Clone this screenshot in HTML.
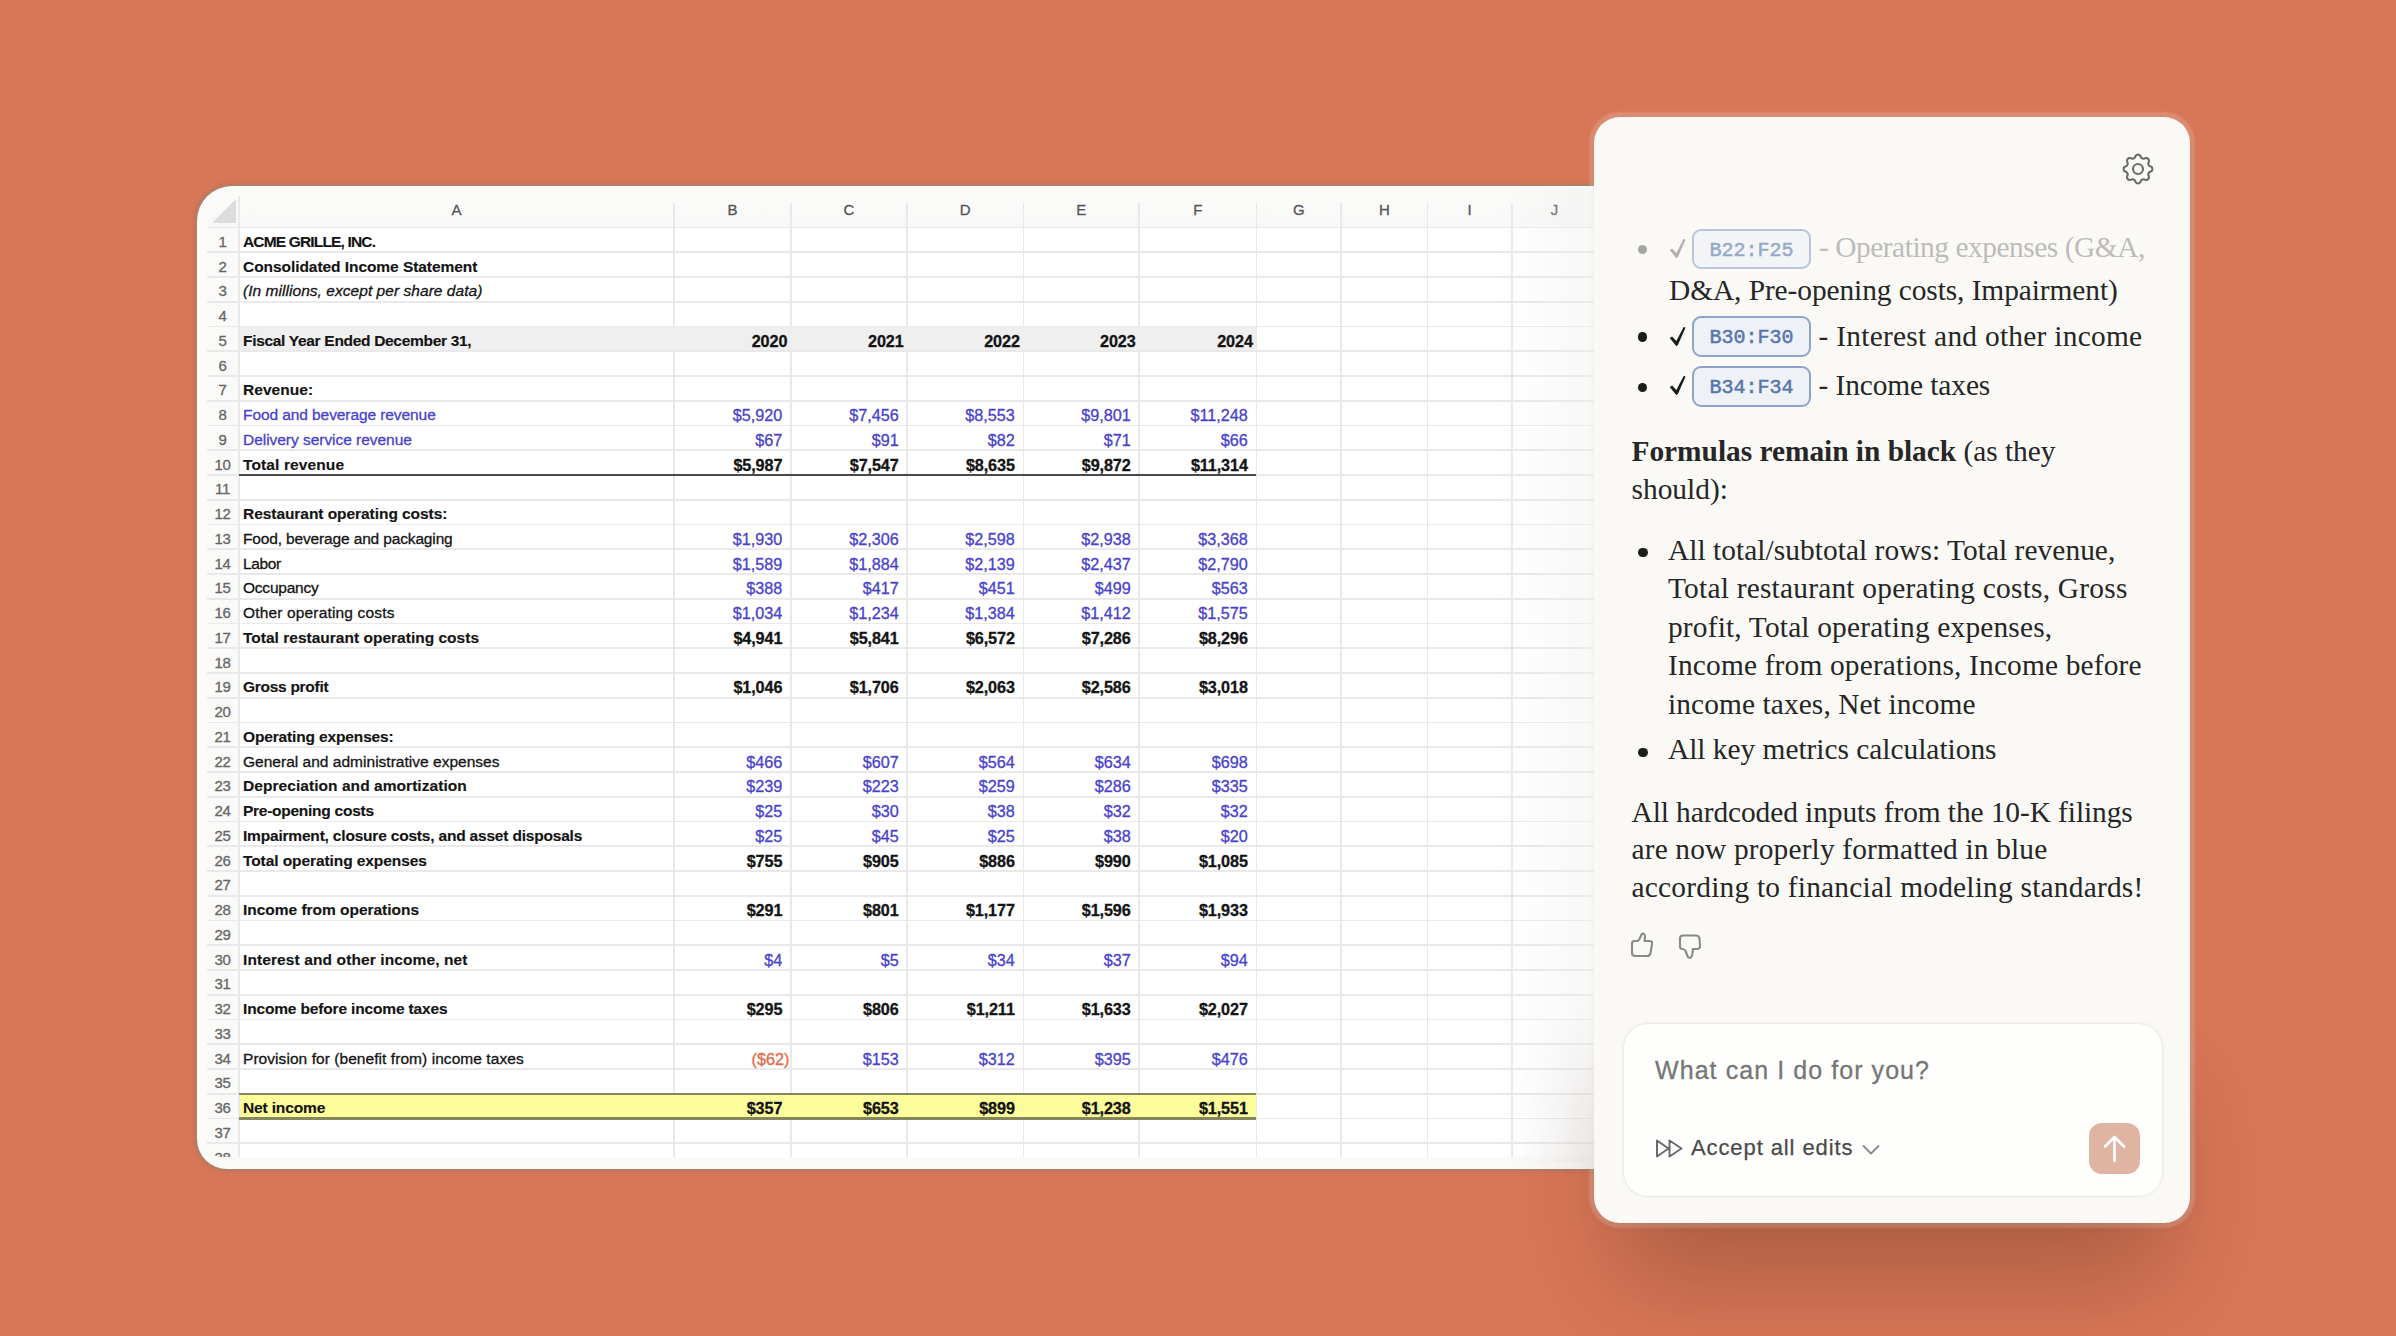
<!DOCTYPE html>
<html><head><meta charset="utf-8">
<style>
html,body{margin:0;padding:0}
body{width:2396px;height:1336px;position:relative;overflow:hidden;background:#d87758;font-family:"Liberation Sans",sans-serif}
.abs{position:absolute}
#sheet{position:absolute;left:197px;top:186px;width:1440px;height:983px;background:#fafaf8;border-radius:35px 0 0 30px;box-shadow:0 0 2px 1.5px rgba(150,140,120,0.55),0 0 5px 2px rgba(120,90,70,0.18)}
#grid{position:absolute;left:0;top:0;width:2396px;height:1336px;clip-path:inset(187px 799px 179px 207px)}
.hl{position:absolute;height:1.6px;background:#e9e9e9}
.vl{position:absolute;width:1.6px;background:#e9e9e9}
.t{position:absolute;white-space:pre;font-size:15.5px;line-height:20px;color:#141414;-webkit-text-stroke:0.3px currentColor}
.b,.b.t{-webkit-text-stroke:0.15px currentColor}
.b{font-weight:bold;letter-spacing:-0.1px}
.i{font-style:italic}
.blue{color:#4842cc}
.rn{position:absolute;width:31px;text-align:center;font-size:15px;line-height:20px;color:#666;letter-spacing:-0.3px;-webkit-text-stroke:0.3px currentColor}
.ch{position:absolute;text-align:center;font-size:15px;line-height:20px;color:#555;-webkit-text-stroke:0.3px currentColor}
.num{position:absolute;text-align:right;white-space:pre;font-size:16.2px;line-height:20px;-webkit-text-stroke:0.3px currentColor}
#chat{position:absolute;left:1594px;top:117px;width:596px;height:1106px;background:#faf9f6;border-radius:26px;box-shadow:0 0 2px 5px rgba(255,255,255,0.17),0 2px 10px rgba(90,50,30,0.12)}
.ct{position:absolute;white-space:pre;font-family:"Liberation Serif",serif;font-size:29.4px;line-height:38px;color:#262626}
</style></head><body>
<div id="sheet"></div>
<div id="grid">

<div class="abs" style="left:239px;top:227px;width:1360px;height:930px;background:#ffffff"></div>
<div class="abs" style="left:207px;top:196px;width:1390px;height:31px;background:linear-gradient(#fbfbf9,#f8f8f8)"></div>
<svg class="abs" style="left:207px;top:192px" width="32" height="35"><polygon points="5,31 29,31 29,7" fill="#dcdcdc"/></svg>
<div class="hl" style="left:207px;top:226.7px;width:1400px"></div>
<div class="hl" style="left:207px;top:251.45px;width:1400px"></div>
<div class="hl" style="left:207px;top:276.2px;width:1400px"></div>
<div class="hl" style="left:207px;top:300.95px;width:1400px"></div>
<div class="hl" style="left:207px;top:325.7px;width:1400px"></div>
<div class="hl" style="left:207px;top:350.45px;width:1400px"></div>
<div class="hl" style="left:207px;top:375.2px;width:1400px"></div>
<div class="hl" style="left:207px;top:399.95px;width:1400px"></div>
<div class="hl" style="left:207px;top:424.7px;width:1400px"></div>
<div class="hl" style="left:207px;top:449.45px;width:1400px"></div>
<div class="hl" style="left:207px;top:474.2px;width:1400px"></div>
<div class="hl" style="left:207px;top:498.95px;width:1400px"></div>
<div class="hl" style="left:207px;top:523.7px;width:1400px"></div>
<div class="hl" style="left:207px;top:548.45px;width:1400px"></div>
<div class="hl" style="left:207px;top:573.2px;width:1400px"></div>
<div class="hl" style="left:207px;top:597.95px;width:1400px"></div>
<div class="hl" style="left:207px;top:622.7px;width:1400px"></div>
<div class="hl" style="left:207px;top:647.45px;width:1400px"></div>
<div class="hl" style="left:207px;top:672.2px;width:1400px"></div>
<div class="hl" style="left:207px;top:696.95px;width:1400px"></div>
<div class="hl" style="left:207px;top:721.7px;width:1400px"></div>
<div class="hl" style="left:207px;top:746.45px;width:1400px"></div>
<div class="hl" style="left:207px;top:771.2px;width:1400px"></div>
<div class="hl" style="left:207px;top:795.95px;width:1400px"></div>
<div class="hl" style="left:207px;top:820.7px;width:1400px"></div>
<div class="hl" style="left:207px;top:845.45px;width:1400px"></div>
<div class="hl" style="left:207px;top:870.2px;width:1400px"></div>
<div class="hl" style="left:207px;top:894.95px;width:1400px"></div>
<div class="hl" style="left:207px;top:919.7px;width:1400px"></div>
<div class="hl" style="left:207px;top:944.45px;width:1400px"></div>
<div class="hl" style="left:207px;top:969.2px;width:1400px"></div>
<div class="hl" style="left:207px;top:993.95px;width:1400px"></div>
<div class="hl" style="left:207px;top:1018.7px;width:1400px"></div>
<div class="hl" style="left:207px;top:1043.45px;width:1400px"></div>
<div class="hl" style="left:207px;top:1068.2px;width:1400px"></div>
<div class="hl" style="left:207px;top:1092.95px;width:1400px"></div>
<div class="hl" style="left:207px;top:1117.7px;width:1400px"></div>
<div class="hl" style="left:207px;top:1142.45px;width:1400px"></div>
<div class="hl" style="left:207px;top:1167.2px;width:1400px"></div>
<div class="vl" style="left:238.2px;top:196px;height:970px"></div>
<div class="vl" style="left:673.4px;top:203px;height:970px"></div>
<div class="vl" style="left:790px;top:203px;height:970px"></div>
<div class="vl" style="left:906.4px;top:203px;height:970px"></div>
<div class="vl" style="left:1022.5px;top:203px;height:970px"></div>
<div class="vl" style="left:1138.4px;top:203px;height:970px"></div>
<div class="vl" style="left:1255.5px;top:203px;height:970px"></div>
<div class="vl" style="left:1340.4px;top:203px;height:970px"></div>
<div class="vl" style="left:1426.7px;top:203px;height:970px"></div>
<div class="vl" style="left:1511px;top:203px;height:970px"></div>
<div class="vl" style="left:1596.2px;top:203px;height:970px"></div>
<div class="abs" style="left:239.8px;top:327.3px;width:1016.5px;height:23.15px;background:#efefef"></div>
<div class="abs" style="left:239.8px;top:1093.75px;width:1016.5px;height:24.75px;background:#fdfd9c"></div>
<div class="abs" style="left:239px;top:473.8px;width:1017.3px;height:2px;background:#4a4a4a"></div>
<div class="abs" style="left:239px;top:1092.55px;width:1017.3px;height:2.4px;background:#85865c"></div>
<div class="abs" style="left:239px;top:1117.3px;width:1017.3px;height:2.4px;background:#85865c"></div>
<div class="ch" style="left:239px;top:200px;width:435.2px">A</div>
<div class="ch" style="left:674.2px;top:200px;width:116.6px">B</div>
<div class="ch" style="left:790.8px;top:200px;width:116.4px">C</div>
<div class="ch" style="left:907.2px;top:200px;width:116.1px">D</div>
<div class="ch" style="left:1023.3px;top:200px;width:115.9px">E</div>
<div class="ch" style="left:1139.2px;top:200px;width:117.1px">F</div>
<div class="ch" style="left:1256.3px;top:200px;width:84.9px">G</div>
<div class="ch" style="left:1341.2px;top:200px;width:86.3px">H</div>
<div class="ch" style="left:1427.5px;top:200px;width:84.3px">I</div>
<div class="ch" style="left:1511.8px;top:200px;width:85.2px">J</div>
<div class="rn" style="left:207px;top:231.8px">1</div>
<div class="t b" style="left:243px;top:231.8px;letter-spacing:-0.837px;">ACME GRILLE, INC.</div>
<div class="rn" style="left:207px;top:256.55px">2</div>
<div class="t b" style="left:243px;top:256.55px;letter-spacing:-0.057px;">Consolidated Income Statement</div>
<div class="rn" style="left:207px;top:281.3px">3</div>
<div class="t i" style="left:243px;top:281.3px;letter-spacing:0.046px;">(In millions, except per share data)</div>
<div class="rn" style="left:207px;top:306.05px">4</div>
<div class="rn" style="left:207px;top:330.8px">5</div>
<div class="t b" style="left:243px;top:330.8px;letter-spacing:-0.307px;">Fiscal Year Ended December 31,</div>
<div class="num" style="left:637.3px;width:150px;top:330.8px;font-weight:bold;color:#141414;letter-spacing:-0.1px">2020</div>
<div class="num" style="left:753.7px;width:150px;top:330.8px;font-weight:bold;color:#141414;letter-spacing:-0.1px">2021</div>
<div class="num" style="left:869.8px;width:150px;top:330.8px;font-weight:bold;color:#141414;letter-spacing:-0.1px">2022</div>
<div class="num" style="left:985.7px;width:150px;top:330.8px;font-weight:bold;color:#141414;letter-spacing:-0.1px">2023</div>
<div class="num" style="left:1102.8px;width:150px;top:330.8px;font-weight:bold;color:#141414;letter-spacing:-0.1px">2024</div>
<div class="rn" style="left:207px;top:355.55px">6</div>
<div class="rn" style="left:207px;top:380.3px">7</div>
<div class="t b" style="left:243px;top:380.3px;letter-spacing:0.043px;">Revenue:</div>
<div class="rn" style="left:207px;top:405.05px">8</div>
<div class="t blue" style="left:243px;top:405.05px;letter-spacing:-0.083px;">Food and beverage revenue</div>
<div class="num" style="left:632.3px;width:150px;top:405.05px;color:#4842cc">$5,920</div>
<div class="num" style="left:748.7px;width:150px;top:405.05px;color:#4842cc">$7,456</div>
<div class="num" style="left:864.8px;width:150px;top:405.05px;color:#4842cc">$8,553</div>
<div class="num" style="left:980.7px;width:150px;top:405.05px;color:#4842cc">$9,801</div>
<div class="num" style="left:1097.8px;width:150px;top:405.05px;color:#4842cc">$11,248</div>
<div class="rn" style="left:207px;top:429.8px">9</div>
<div class="t blue" style="left:243px;top:429.8px;letter-spacing:-0.035px;">Delivery service revenue</div>
<div class="num" style="left:632.3px;width:150px;top:429.8px;color:#4842cc">$67</div>
<div class="num" style="left:748.7px;width:150px;top:429.8px;color:#4842cc">$91</div>
<div class="num" style="left:864.8px;width:150px;top:429.8px;color:#4842cc">$82</div>
<div class="num" style="left:980.7px;width:150px;top:429.8px;color:#4842cc">$71</div>
<div class="num" style="left:1097.8px;width:150px;top:429.8px;color:#4842cc">$66</div>
<div class="rn" style="left:207px;top:454.55px">10</div>
<div class="t b" style="left:243px;top:454.55px;letter-spacing:0.117px;">Total revenue</div>
<div class="num" style="left:632.3px;width:150px;top:454.55px;font-weight:bold;color:#141414;letter-spacing:-0.1px">$5,987</div>
<div class="num" style="left:748.7px;width:150px;top:454.55px;font-weight:bold;color:#141414;letter-spacing:-0.1px">$7,547</div>
<div class="num" style="left:864.8px;width:150px;top:454.55px;font-weight:bold;color:#141414;letter-spacing:-0.1px">$8,635</div>
<div class="num" style="left:980.7px;width:150px;top:454.55px;font-weight:bold;color:#141414;letter-spacing:-0.1px">$9,872</div>
<div class="num" style="left:1097.8px;width:150px;top:454.55px;font-weight:bold;color:#141414;letter-spacing:-0.1px">$11,314</div>
<div class="rn" style="left:207px;top:479.3px">11</div>
<div class="rn" style="left:207px;top:504.05px">12</div>
<div class="t b" style="left:243px;top:504.05px;letter-spacing:-0.054px;">Restaurant operating costs:</div>
<div class="rn" style="left:207px;top:528.8px">13</div>
<div class="t " style="left:243px;top:528.8px;letter-spacing:-0.148px;">Food, beverage and packaging</div>
<div class="num" style="left:632.3px;width:150px;top:528.8px;color:#4842cc">$1,930</div>
<div class="num" style="left:748.7px;width:150px;top:528.8px;color:#4842cc">$2,306</div>
<div class="num" style="left:864.8px;width:150px;top:528.8px;color:#4842cc">$2,598</div>
<div class="num" style="left:980.7px;width:150px;top:528.8px;color:#4842cc">$2,938</div>
<div class="num" style="left:1097.8px;width:150px;top:528.8px;color:#4842cc">$3,368</div>
<div class="rn" style="left:207px;top:553.55px">14</div>
<div class="t " style="left:243px;top:553.55px;letter-spacing:-0.400px;">Labor</div>
<div class="num" style="left:632.3px;width:150px;top:553.55px;color:#4842cc">$1,589</div>
<div class="num" style="left:748.7px;width:150px;top:553.55px;color:#4842cc">$1,884</div>
<div class="num" style="left:864.8px;width:150px;top:553.55px;color:#4842cc">$2,139</div>
<div class="num" style="left:980.7px;width:150px;top:553.55px;color:#4842cc">$2,437</div>
<div class="num" style="left:1097.8px;width:150px;top:553.55px;color:#4842cc">$2,790</div>
<div class="rn" style="left:207px;top:578.3px">15</div>
<div class="t " style="left:243px;top:578.3px;letter-spacing:-0.225px;">Occupancy</div>
<div class="num" style="left:632.3px;width:150px;top:578.3px;color:#4842cc">$388</div>
<div class="num" style="left:748.7px;width:150px;top:578.3px;color:#4842cc">$417</div>
<div class="num" style="left:864.8px;width:150px;top:578.3px;color:#4842cc">$451</div>
<div class="num" style="left:980.7px;width:150px;top:578.3px;color:#4842cc">$499</div>
<div class="num" style="left:1097.8px;width:150px;top:578.3px;color:#4842cc">$563</div>
<div class="rn" style="left:207px;top:603.05px">16</div>
<div class="t " style="left:243px;top:603.05px;letter-spacing:0.160px;">Other operating costs</div>
<div class="num" style="left:632.3px;width:150px;top:603.05px;color:#4842cc">$1,034</div>
<div class="num" style="left:748.7px;width:150px;top:603.05px;color:#4842cc">$1,234</div>
<div class="num" style="left:864.8px;width:150px;top:603.05px;color:#4842cc">$1,384</div>
<div class="num" style="left:980.7px;width:150px;top:603.05px;color:#4842cc">$1,412</div>
<div class="num" style="left:1097.8px;width:150px;top:603.05px;color:#4842cc">$1,575</div>
<div class="rn" style="left:207px;top:627.8px">17</div>
<div class="t b" style="left:243px;top:627.8px;letter-spacing:0.010px;">Total restaurant operating costs</div>
<div class="num" style="left:632.3px;width:150px;top:627.8px;font-weight:bold;color:#141414;letter-spacing:-0.1px">$4,941</div>
<div class="num" style="left:748.7px;width:150px;top:627.8px;font-weight:bold;color:#141414;letter-spacing:-0.1px">$5,841</div>
<div class="num" style="left:864.8px;width:150px;top:627.8px;font-weight:bold;color:#141414;letter-spacing:-0.1px">$6,572</div>
<div class="num" style="left:980.7px;width:150px;top:627.8px;font-weight:bold;color:#141414;letter-spacing:-0.1px">$7,286</div>
<div class="num" style="left:1097.8px;width:150px;top:627.8px;font-weight:bold;color:#141414;letter-spacing:-0.1px">$8,296</div>
<div class="rn" style="left:207px;top:652.55px">18</div>
<div class="rn" style="left:207px;top:677.3px">19</div>
<div class="t b" style="left:243px;top:677.3px;letter-spacing:-0.282px;">Gross profit</div>
<div class="num" style="left:632.3px;width:150px;top:677.3px;font-weight:bold;color:#141414;letter-spacing:-0.1px">$1,046</div>
<div class="num" style="left:748.7px;width:150px;top:677.3px;font-weight:bold;color:#141414;letter-spacing:-0.1px">$1,706</div>
<div class="num" style="left:864.8px;width:150px;top:677.3px;font-weight:bold;color:#141414;letter-spacing:-0.1px">$2,063</div>
<div class="num" style="left:980.7px;width:150px;top:677.3px;font-weight:bold;color:#141414;letter-spacing:-0.1px">$2,586</div>
<div class="num" style="left:1097.8px;width:150px;top:677.3px;font-weight:bold;color:#141414;letter-spacing:-0.1px">$3,018</div>
<div class="rn" style="left:207px;top:702.05px">20</div>
<div class="rn" style="left:207px;top:726.8px">21</div>
<div class="t b" style="left:243px;top:726.8px;letter-spacing:-0.144px;">Operating expenses:</div>
<div class="rn" style="left:207px;top:751.55px">22</div>
<div class="t " style="left:243px;top:751.55px;letter-spacing:0.018px;">General and administrative expenses</div>
<div class="num" style="left:632.3px;width:150px;top:751.55px;color:#4842cc">$466</div>
<div class="num" style="left:748.7px;width:150px;top:751.55px;color:#4842cc">$607</div>
<div class="num" style="left:864.8px;width:150px;top:751.55px;color:#4842cc">$564</div>
<div class="num" style="left:980.7px;width:150px;top:751.55px;color:#4842cc">$634</div>
<div class="num" style="left:1097.8px;width:150px;top:751.55px;color:#4842cc">$698</div>
<div class="rn" style="left:207px;top:776.3px">23</div>
<div class="t b" style="left:243px;top:776.3px;letter-spacing:0.057px;">Depreciation and amortization</div>
<div class="num" style="left:632.3px;width:150px;top:776.3px;color:#4842cc">$239</div>
<div class="num" style="left:748.7px;width:150px;top:776.3px;color:#4842cc">$223</div>
<div class="num" style="left:864.8px;width:150px;top:776.3px;color:#4842cc">$259</div>
<div class="num" style="left:980.7px;width:150px;top:776.3px;color:#4842cc">$286</div>
<div class="num" style="left:1097.8px;width:150px;top:776.3px;color:#4842cc">$335</div>
<div class="rn" style="left:207px;top:801.05px">24</div>
<div class="t b" style="left:243px;top:801.05px;letter-spacing:-0.263px;">Pre-opening costs</div>
<div class="num" style="left:632.3px;width:150px;top:801.05px;color:#4842cc">$25</div>
<div class="num" style="left:748.7px;width:150px;top:801.05px;color:#4842cc">$30</div>
<div class="num" style="left:864.8px;width:150px;top:801.05px;color:#4842cc">$38</div>
<div class="num" style="left:980.7px;width:150px;top:801.05px;color:#4842cc">$32</div>
<div class="num" style="left:1097.8px;width:150px;top:801.05px;color:#4842cc">$32</div>
<div class="rn" style="left:207px;top:825.8px">25</div>
<div class="t b" style="left:243px;top:825.8px;letter-spacing:-0.193px;">Impairment, closure costs, and asset disposals</div>
<div class="num" style="left:632.3px;width:150px;top:825.8px;color:#4842cc">$25</div>
<div class="num" style="left:748.7px;width:150px;top:825.8px;color:#4842cc">$45</div>
<div class="num" style="left:864.8px;width:150px;top:825.8px;color:#4842cc">$25</div>
<div class="num" style="left:980.7px;width:150px;top:825.8px;color:#4842cc">$38</div>
<div class="num" style="left:1097.8px;width:150px;top:825.8px;color:#4842cc">$20</div>
<div class="rn" style="left:207px;top:850.55px">26</div>
<div class="t b" style="left:243px;top:850.55px;letter-spacing:-0.083px;">Total operating expenses</div>
<div class="num" style="left:632.3px;width:150px;top:850.55px;font-weight:bold;color:#141414;letter-spacing:-0.1px">$755</div>
<div class="num" style="left:748.7px;width:150px;top:850.55px;font-weight:bold;color:#141414;letter-spacing:-0.1px">$905</div>
<div class="num" style="left:864.8px;width:150px;top:850.55px;font-weight:bold;color:#141414;letter-spacing:-0.1px">$886</div>
<div class="num" style="left:980.7px;width:150px;top:850.55px;font-weight:bold;color:#141414;letter-spacing:-0.1px">$990</div>
<div class="num" style="left:1097.8px;width:150px;top:850.55px;font-weight:bold;color:#141414;letter-spacing:-0.1px">$1,085</div>
<div class="rn" style="left:207px;top:875.3px">27</div>
<div class="rn" style="left:207px;top:900.05px">28</div>
<div class="t b" style="left:243px;top:900.05px;letter-spacing:-0.024px;">Income from operations</div>
<div class="num" style="left:632.3px;width:150px;top:900.05px;font-weight:bold;color:#141414;letter-spacing:-0.1px">$291</div>
<div class="num" style="left:748.7px;width:150px;top:900.05px;font-weight:bold;color:#141414;letter-spacing:-0.1px">$801</div>
<div class="num" style="left:864.8px;width:150px;top:900.05px;font-weight:bold;color:#141414;letter-spacing:-0.1px">$1,177</div>
<div class="num" style="left:980.7px;width:150px;top:900.05px;font-weight:bold;color:#141414;letter-spacing:-0.1px">$1,596</div>
<div class="num" style="left:1097.8px;width:150px;top:900.05px;font-weight:bold;color:#141414;letter-spacing:-0.1px">$1,933</div>
<div class="rn" style="left:207px;top:924.8px">29</div>
<div class="rn" style="left:207px;top:949.55px">30</div>
<div class="t b" style="left:243px;top:949.55px;letter-spacing:0.107px;">Interest and other income, net</div>
<div class="num" style="left:632.3px;width:150px;top:949.55px;color:#4842cc">$4</div>
<div class="num" style="left:748.7px;width:150px;top:949.55px;color:#4842cc">$5</div>
<div class="num" style="left:864.8px;width:150px;top:949.55px;color:#4842cc">$34</div>
<div class="num" style="left:980.7px;width:150px;top:949.55px;color:#4842cc">$37</div>
<div class="num" style="left:1097.8px;width:150px;top:949.55px;color:#4842cc">$94</div>
<div class="rn" style="left:207px;top:974.3px">31</div>
<div class="rn" style="left:207px;top:999.05px">32</div>
<div class="t b" style="left:243px;top:999.05px;letter-spacing:-0.156px;">Income before income taxes</div>
<div class="num" style="left:632.3px;width:150px;top:999.05px;font-weight:bold;color:#141414;letter-spacing:-0.1px">$295</div>
<div class="num" style="left:748.7px;width:150px;top:999.05px;font-weight:bold;color:#141414;letter-spacing:-0.1px">$806</div>
<div class="num" style="left:864.8px;width:150px;top:999.05px;font-weight:bold;color:#141414;letter-spacing:-0.1px">$1,211</div>
<div class="num" style="left:980.7px;width:150px;top:999.05px;font-weight:bold;color:#141414;letter-spacing:-0.1px">$1,633</div>
<div class="num" style="left:1097.8px;width:150px;top:999.05px;font-weight:bold;color:#141414;letter-spacing:-0.1px">$2,027</div>
<div class="rn" style="left:207px;top:1023.8px">33</div>
<div class="rn" style="left:207px;top:1048.55px">34</div>
<div class="t " style="left:243px;top:1048.55px;letter-spacing:0.060px;">Provision for (benefit from) income taxes</div>
<div class="num" style="left:639.3px;width:150px;top:1048.55px;color:#e2694a">($62)</div>
<div class="num" style="left:748.7px;width:150px;top:1048.55px;color:#4842cc">$153</div>
<div class="num" style="left:864.8px;width:150px;top:1048.55px;color:#4842cc">$312</div>
<div class="num" style="left:980.7px;width:150px;top:1048.55px;color:#4842cc">$395</div>
<div class="num" style="left:1097.8px;width:150px;top:1048.55px;color:#4842cc">$476</div>
<div class="rn" style="left:207px;top:1073.3px">35</div>
<div class="rn" style="left:207px;top:1098.05px">36</div>
<div class="t b" style="left:243px;top:1098.05px;letter-spacing:-0.144px;">Net income</div>
<div class="num" style="left:632.3px;width:150px;top:1098.05px;font-weight:bold;color:#141414;letter-spacing:-0.1px">$357</div>
<div class="num" style="left:748.7px;width:150px;top:1098.05px;font-weight:bold;color:#141414;letter-spacing:-0.1px">$653</div>
<div class="num" style="left:864.8px;width:150px;top:1098.05px;font-weight:bold;color:#141414;letter-spacing:-0.1px">$899</div>
<div class="num" style="left:980.7px;width:150px;top:1098.05px;font-weight:bold;color:#141414;letter-spacing:-0.1px">$1,238</div>
<div class="num" style="left:1097.8px;width:150px;top:1098.05px;font-weight:bold;color:#141414;letter-spacing:-0.1px">$1,551</div>
<div class="rn" style="left:207px;top:1122.8px">37</div>
<div class="rn" style="left:207px;top:1147.55px">38</div>
</div>
<div class="abs" style="left:1500px;top:187px;width:95px;height:975px;background:linear-gradient(90deg,rgba(240,240,240,0),rgba(236,236,236,0.35) 85%,rgba(250,250,250,0.5))"></div>
<div class="abs" style="left:1625px;top:1040px;width:534px;height:183px;border-radius:26px;background:#d87758;box-shadow:0 50px 100px 10px rgba(80,35,15,0.3)"></div>
<div id="chat"></div>
<svg class="abs" style="left:2118px;top:149px" width="40" height="40"><path d="M34.35,20.00 L34.31,20.56 L34.17,21.12 L33.89,21.64 L33.38,22.12 L32.65,22.52 L31.92,22.86 L31.37,23.21 L31.02,23.58 L30.77,23.97 L30.58,24.38 L30.42,24.81 L30.32,25.26 L30.31,25.77 L30.45,26.40 L30.73,27.17 L30.96,27.96 L30.98,28.66 L30.81,29.23 L30.52,29.72 L30.15,30.15 L29.72,30.52 L29.23,30.81 L28.66,30.98 L27.96,30.96 L27.17,30.73 L26.40,30.45 L25.77,30.31 L25.26,30.32 L24.81,30.42 L24.38,30.58 L23.97,30.77 L23.58,31.02 L23.21,31.37 L22.86,31.92 L22.52,32.65 L22.12,33.38 L21.64,33.89 L21.12,34.17 L20.56,34.31 L20.00,34.35 L19.44,34.31 L18.88,34.17 L18.36,33.89 L17.88,33.38 L17.48,32.65 L17.14,31.92 L16.79,31.37 L16.42,31.02 L16.03,30.77 L15.62,30.58 L15.19,30.42 L14.74,30.32 L14.23,30.31 L13.60,30.45 L12.83,30.73 L12.04,30.96 L11.34,30.98 L10.77,30.81 L10.28,30.52 L9.85,30.15 L9.48,29.72 L9.19,29.23 L9.02,28.66 L9.04,27.96 L9.27,27.17 L9.55,26.40 L9.69,25.77 L9.68,25.26 L9.58,24.81 L9.42,24.38 L9.23,23.97 L8.98,23.58 L8.63,23.21 L8.08,22.86 L7.35,22.52 L6.62,22.12 L6.11,21.64 L5.83,21.12 L5.69,20.56 L5.65,20.00 L5.69,19.44 L5.83,18.88 L6.11,18.36 L6.62,17.88 L7.35,17.48 L8.08,17.14 L8.63,16.79 L8.98,16.42 L9.23,16.03 L9.42,15.62 L9.58,15.19 L9.68,14.74 L9.69,14.23 L9.55,13.60 L9.27,12.83 L9.04,12.04 L9.02,11.34 L9.19,10.77 L9.48,10.28 L9.85,9.85 L10.28,9.48 L10.77,9.19 L11.34,9.02 L12.04,9.04 L12.83,9.27 L13.60,9.55 L14.23,9.69 L14.74,9.68 L15.19,9.58 L15.62,9.42 L16.03,9.23 L16.42,8.98 L16.79,8.63 L17.14,8.08 L17.48,7.35 L17.88,6.62 L18.36,6.11 L18.88,5.83 L19.44,5.69 L20.00,5.65 L20.56,5.69 L21.12,5.83 L21.64,6.11 L22.12,6.62 L22.52,7.35 L22.86,8.08 L23.21,8.63 L23.58,8.98 L23.97,9.23 L24.38,9.42 L24.81,9.58 L25.26,9.68 L25.77,9.69 L26.40,9.55 L27.17,9.27 L27.96,9.04 L28.66,9.02 L29.23,9.19 L29.72,9.48 L30.15,9.85 L30.52,10.28 L30.81,10.77 L30.98,11.34 L30.96,12.04 L30.73,12.83 L30.45,13.60 L30.31,14.23 L30.32,14.74 L30.42,15.19 L30.58,15.62 L30.77,16.03 L31.02,16.42 L31.37,16.79 L31.92,17.14 L32.65,17.48 L33.38,17.88 L33.89,18.36 L34.17,18.88 L34.31,19.44 L34.35,20.00Z" fill="none" stroke="#6a6a6a" stroke-width="2.1" stroke-linejoin="round"/><circle cx="20" cy="20" r="5" fill="none" stroke="#6a6a6a" stroke-width="2.1"/></svg>
<div class="abs" style="left:1638.2px;top:244.9px;width:9.2px;height:9.2px;border-radius:50%;background:#9a9a9a;opacity:0.9"></div>
<svg class="abs" style="left:1668.5px;top:238.3px;opacity:0.32" width="18" height="22"><path d="M0.9,12.2 Q1.6,10.4 3.4,10.7 L7.3,15.0 L14.5,1.3 Q15.7,0.4 16.5,1.7 L8.9,19.1 Q7.7,20.6 6.6,19.2 Z" fill="#1c1c1c"/></svg>
<div class="abs" style="left:1691.5px;top:228.8px;width:115.5px;height:36.5px;border:2.3px solid #8ea3c9;border-radius:9px;background:#eef1f6;opacity:0.6"></div>
<div class="abs" style="left:1691.5px;top:228.8px;width:120px;height:41px;line-height:44px;text-align:center;font-family:'Liberation Mono',monospace;font-size:20px;color:#5876ad;-webkit-text-stroke:0.5px currentColor;opacity:0.6">B22:F25</div>
<div class="ct" style="left:1819px;top:228.1px;letter-spacing:-0.464px;color:#bdbcb9">- Operating expenses (G&amp;A,</div>
<div class="ct" style="left:1669px;top:270.8px;letter-spacing:-0.076px;">D&amp;A, Pre-opening costs, Impairment)</div>
<div class="abs" style="left:1637.8px;top:332.4px;width:9.2px;height:9.2px;border-radius:50%;background:#1c1c1c;opacity:1"></div>
<svg class="abs" style="left:1668.5px;top:325.6px;opacity:1" width="18" height="22"><path d="M0.9,12.2 Q1.6,10.4 3.4,10.7 L7.3,15.0 L14.5,1.3 Q15.7,0.4 16.5,1.7 L8.9,19.1 Q7.7,20.6 6.6,19.2 Z" fill="#1c1c1c"/></svg>
<div class="abs" style="left:1691.5px;top:316px;width:115.5px;height:36.5px;border:2.3px solid #8ea3c9;border-radius:9px;background:#eef1f6;opacity:1"></div>
<div class="abs" style="left:1691.5px;top:316px;width:120px;height:41px;line-height:44px;text-align:center;font-family:'Liberation Mono',monospace;font-size:20px;color:#5876ad;-webkit-text-stroke:0.5px currentColor;opacity:1">B30:F30</div>
<div class="ct" style="left:1818.5px;top:316.7px;letter-spacing:0.269px;">- Interest and other income</div>
<div class="abs" style="left:1637.8px;top:382.5px;width:9.2px;height:9.2px;border-radius:50%;background:#1c1c1c;opacity:1"></div>
<svg class="abs" style="left:1668.5px;top:375.4px;opacity:1" width="18" height="22"><path d="M0.9,12.2 Q1.6,10.4 3.4,10.7 L7.3,15.0 L14.5,1.3 Q15.7,0.4 16.5,1.7 L8.9,19.1 Q7.7,20.6 6.6,19.2 Z" fill="#1c1c1c"/></svg>
<div class="abs" style="left:1691.5px;top:366.4px;width:115.5px;height:36.5px;border:2.3px solid #8ea3c9;border-radius:9px;background:#eef1f6;opacity:1"></div>
<div class="abs" style="left:1691.5px;top:366.4px;width:120px;height:41px;line-height:44px;text-align:center;font-family:'Liberation Mono',monospace;font-size:20px;color:#5876ad;-webkit-text-stroke:0.5px currentColor;opacity:1">B34:F34</div>
<div class="ct" style="left:1818.5px;top:366.3px;letter-spacing:-0.092px;">- Income taxes</div>
<div class="ct" style="left:1631.5px;top:431.6px;letter-spacing:-0.025px;"><b>Formulas remain in black</b> (as they</div>
<div class="ct" style="left:1631.5px;top:470.4px;letter-spacing:0.000px;">should):</div>
<div class="ct" style="left:1668px;top:530.7px;letter-spacing:0.047px;">All total/subtotal rows: Total revenue,</div>
<div class="ct" style="left:1668px;top:569.2px;letter-spacing:0.221px;">Total restaurant operating costs, Gross</div>
<div class="ct" style="left:1668px;top:607.8px;letter-spacing:0.175px;">profit, Total operating expenses,</div>
<div class="ct" style="left:1668px;top:646.4px;letter-spacing:0.167px;">Income from operations, Income before</div>
<div class="ct" style="left:1668px;top:684.9px;letter-spacing:0.096px;">income taxes, Net income</div>
<div class="abs" style="left:1638.4px;top:548.1px;width:9.2px;height:9.2px;border-radius:50%;background:#1c1c1c;opacity:1"></div>
<div class="ct" style="left:1668px;top:730.3px;letter-spacing:-0.015px;">All key metrics calculations</div>
<div class="abs" style="left:1638.4px;top:747.7px;width:9.2px;height:9.2px;border-radius:50%;background:#1c1c1c;opacity:1"></div>
<div class="ct" style="left:1631.5px;top:792.5px;letter-spacing:-0.078px;">All hardcoded inputs from the 10-K filings</div>
<div class="ct" style="left:1631.5px;top:830.3px;letter-spacing:0.158px;">are now properly formatted in blue</div>
<div class="ct" style="left:1631.5px;top:868.1px;letter-spacing:0.220px;">according to financial modeling standards!</div>
<svg class="abs" style="left:1628px;top:930px" width="28" height="30"><path d="M4,13.5 Q4,11 6.5,11 L9,11 Q10.5,11 11.5,9 L13.5,4.5 Q14.5,3 16,4 Q17.2,5 17,7 L16.5,11 L21.5,11 Q24.5,11 24,14 L22.5,23 Q22,26 19,26 L7,26 Q4,26 4,23 Z" fill="none" stroke="#8a8a8a" stroke-width="2.1" stroke-linejoin="round"/></svg>
<svg class="abs" style="left:1676px;top:932px" width="28" height="30"><path d="M4,6.5 Q4,3.5 7,3.5 L20,3.5 Q23,3.5 23.5,6.5 L24,14 Q24,17 21,17 L17,17 L16.5,21 Q16,26 13.5,26 Q12,26 11.5,24 L9.5,19 Q8.5,17 6.5,17 Q4,17 4,14.5 Z" fill="none" stroke="#8a8a8a" stroke-width="2.1" stroke-linejoin="round"/></svg>
<div class="abs" style="left:1624px;top:1023.5px;width:538px;height:172.5px;border-radius:24px;background:#fefefd;box-shadow:0 0 0 1px rgba(0,0,0,0.035),0 0 5px 1px rgba(0,0,0,0.045)"></div>
<div class="abs" style="left:1655px;top:1053.5px;white-space:pre;font-size:25px;line-height:32px;letter-spacing:1.07px;color:#767676;-webkit-text-stroke:0.3px currentColor">What can I do for you?</div>
<svg class="abs" style="left:1654px;top:1137px" width="32" height="24"><path d="M3,3.5 L14.5,11.5 L3,19.5 Z M15.5,3.5 L27.5,11.5 L15.5,19.5 Z" fill="none" stroke="#6a6a6a" stroke-width="2" stroke-linejoin="round"/></svg>
<div class="abs" style="left:1691px;top:1133px;white-space:pre;font-size:22px;line-height:30px;letter-spacing:0.9px;color:#4a4a4a;-webkit-text-stroke:0.25px currentColor">Accept all edits</div>
<svg class="abs" style="left:1860px;top:1141px" width="22" height="18"><path d="M3.5,5 L11,12.5 L18.5,5" fill="none" stroke="#8a8a8a" stroke-width="1.8" stroke-linecap="round" stroke-linejoin="round"/></svg>
<div class="abs" style="left:2089px;top:1123px;width:51px;height:51px;border-radius:13px;background:#e0b4a2"></div>
<svg class="abs" style="left:2089px;top:1123px" width="51" height="51"><path d="M25.5,38 L25.5,14 M16,23.5 L25.5,14 L35,23.5" fill="none" stroke="#ffffff" stroke-width="2.6" stroke-linecap="round" stroke-linejoin="round"/></svg>
</body></html>
